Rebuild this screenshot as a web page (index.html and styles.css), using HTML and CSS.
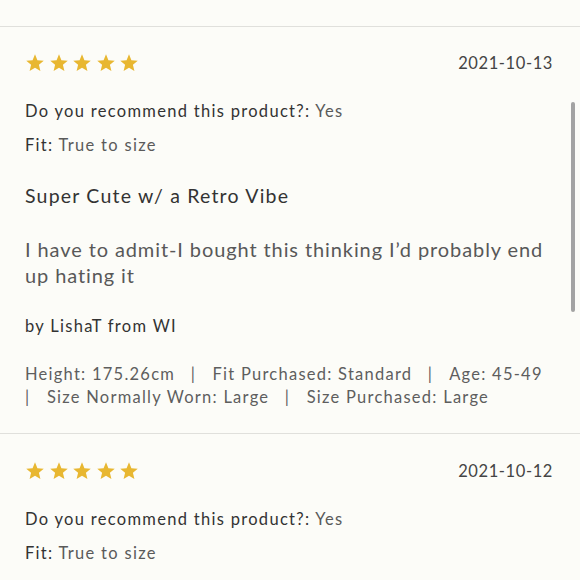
FILE: index.html
```html
<!DOCTYPE html>
<html>
<head>
<meta charset="utf-8">
<link rel="stylesheet" href="styles.css">
</head>
<body>
<div class="page">
  <div class="topbar"></div>
  <div class="review">
    <div class="head">
      <div class="stars">
        <svg class="star" viewBox="0 0 24 24"><polygon points="12,1.5 14.9,8.6 22.5,9.2 16.7,14.1 18.5,21.6 12,17.6 5.5,21.6 7.3,14.1 1.5,9.2 9.1,8.6"/></svg>
        <svg class="star" viewBox="0 0 24 24"><polygon points="12,1.5 14.9,8.6 22.5,9.2 16.7,14.1 18.5,21.6 12,17.6 5.5,21.6 7.3,14.1 1.5,9.2 9.1,8.6"/></svg>
        <svg class="star" viewBox="0 0 24 24"><polygon points="12,1.5 14.9,8.6 22.5,9.2 16.7,14.1 18.5,21.6 12,17.6 5.5,21.6 7.3,14.1 1.5,9.2 9.1,8.6"/></svg>
        <svg class="star" viewBox="0 0 24 24"><polygon points="12,1.5 14.9,8.6 22.5,9.2 16.7,14.1 18.5,21.6 12,17.6 5.5,21.6 7.3,14.1 1.5,9.2 9.1,8.6"/></svg>
        <svg class="star" viewBox="0 0 24 24"><polygon points="12,1.5 14.9,8.6 22.5,9.2 16.7,14.1 18.5,21.6 12,17.6 5.5,21.6 7.3,14.1 1.5,9.2 9.1,8.6"/></svg>
      </div>
      <div class="date">2021-10-13</div>
    </div>
    <div class="meta rec"><span class="label">Do you recommend this product?:</span> <span class="value">Yes</span></div>
    <div class="meta fit"><span class="label">Fit:</span> <span class="value">True to size</span></div>
    <div class="title">Super Cute w/ a Retro Vibe</div>
    <div class="body">I have to admit-I bought this thinking I’d probably end up hating it</div>
    <div class="author">by LishaT from WI</div>
    <div class="details"><span class="item">Height: 175.26cm</span> <span class="sep">|</span> <span class="item">Fit Purchased: Standard</span> <span class="sep">|</span> <span class="item">Age: 45-49</span> <span class="sep">|</span> <span class="item">Size Normally Worn: Large</span> <span class="sep">|</span> <span class="item last">Size Purchased: Large</span></div>
  </div>
  <div class="review">
    <div class="head">
      <div class="stars">
        <svg class="star" viewBox="0 0 24 24"><polygon points="12,1.5 14.9,8.6 22.5,9.2 16.7,14.1 18.5,21.6 12,17.6 5.5,21.6 7.3,14.1 1.5,9.2 9.1,8.6"/></svg>
        <svg class="star" viewBox="0 0 24 24"><polygon points="12,1.5 14.9,8.6 22.5,9.2 16.7,14.1 18.5,21.6 12,17.6 5.5,21.6 7.3,14.1 1.5,9.2 9.1,8.6"/></svg>
        <svg class="star" viewBox="0 0 24 24"><polygon points="12,1.5 14.9,8.6 22.5,9.2 16.7,14.1 18.5,21.6 12,17.6 5.5,21.6 7.3,14.1 1.5,9.2 9.1,8.6"/></svg>
        <svg class="star" viewBox="0 0 24 24"><polygon points="12,1.5 14.9,8.6 22.5,9.2 16.7,14.1 18.5,21.6 12,17.6 5.5,21.6 7.3,14.1 1.5,9.2 9.1,8.6"/></svg>
        <svg class="star" viewBox="0 0 24 24"><polygon points="12,1.5 14.9,8.6 22.5,9.2 16.7,14.1 18.5,21.6 12,17.6 5.5,21.6 7.3,14.1 1.5,9.2 9.1,8.6"/></svg>
      </div>
      <div class="date">2021-10-12</div>
    </div>
    <div class="meta rec"><span class="label">Do you recommend this product?:</span> <span class="value">Yes</span></div>
    <div class="meta fit"><span class="label">Fit:</span> <span class="value">True to size</span></div>
  </div>
  <div class="scrollbar"></div>
</div>
</body>
</html>
```
FILE: styles.css
```css
html, body {
  margin: 0;
  padding: 0;
  background: #fcfcf8;
}
body {
  font-family: "Lato", "Open Sans", sans-serif;
  color: #3a3a3a;
  overflow: hidden;
  height: 580px;
}
.page {
  position: relative;
  height: 580px;
}
.topbar {
  height: 26px;
  border-bottom: 1px solid #e0e0dc;
}
.review {
  padding: 25px 27px 24px 25px;
  border-bottom: 1px solid #e0e0dc;
}
.review + .review {
  padding-top: 26px;
}
.head {
  display: flex;
  justify-content: space-between;
  align-items: center;
  height: 22px;
}
.stars {
  display: flex;
  gap: 3.5px;
}
.star {
  width: 20px;
  height: 20px;
  fill: #e8b731;
}
.date {
  font-size: 16.5px;
  color: #444;
  letter-spacing: 0.6px;
}
.meta {
  font-size: 16.5px;
  line-height: 22px;
  letter-spacing: 1.3px;
}
.rec { margin-top: 26px; }
.fit { margin-top: 12px; }
.label { color: #333; }
.value { color: #5a5a5a; }
.title {
  margin-top: 28px;
  font-size: 19.5px;
  line-height: 24px;
  color: #333;
  letter-spacing: 1.2px;
}
.body {
  margin-top: 28px;
  font-size: 20px;
  line-height: 26px;
  color: #585858;
  letter-spacing: 0.9px;
}
.author {
  margin-top: 27px;
  font-size: 16.5px;
  line-height: 22px;
  color: #333;
  letter-spacing: 1.3px;
}
.details {
  margin-top: 26px;
  font-size: 16.5px;
  line-height: 23px;
  color: #5e5e5e;
  letter-spacing: 1.25px;
}
.item {
  white-space: nowrap;
  margin-right: 10px;
}
.item.last { margin-right: 0; }
.sep { margin-right: 11px; }
.scrollbar {
  position: absolute;
  left: 571px;
  top: 102px;
  width: 4px;
  height: 210px;
  border-radius: 2px;
  background: #a3a3a3;
}
```
